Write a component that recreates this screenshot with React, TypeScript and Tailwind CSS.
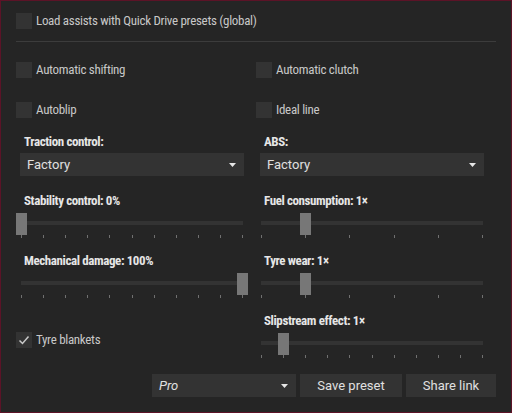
import React from "react";

const narrow = "font-['Roboto_Condensed','Liberation_Sans_Narrow','DejaVu_Sans_Condensed',sans-serif]";
const ui = "font-['Roboto','Liberation_Sans',sans-serif]";

function Check({ label, checked = false }: { label: string; checked?: boolean }) {
  return (
    <div className="flex items-center h-4">
      <div className="w-4 h-4 bg-[#333333] flex items-center justify-center">
        {checked && (
          <svg width="12" height="12" viewBox="0 0 12 12">
            <path d="M1.5 6.5 L4.5 9.5 L10.5 2.5" stroke="#c8c8c8" strokeWidth="1.5" fill="none" />
          </svg>
        )}
      </div>
      <span className={`ml-1 text-[13px] tracking-[-0.3px] leading-4 text-[#c8c8c8] ${narrow}`}>{label}</span>
    </div>
  );
}

function Label({ text }: { text: string }) {
  return (
    <div className={`pl-2 text-[13px] tracking-[-0.4px] leading-4 font-bold text-[#e6e6e6] ${narrow}`}>{text}</div>
  );
}

function Arrow() {
  return (
    <svg width="7" height="4" viewBox="0 0 7 4">
      <path d="M0 0 H7 L3.5 4 Z" fill="#e6e6e6" />
    </svg>
  );
}

function Select({ value, italic = false, className = "" }: { value: string; italic?: boolean; className?: string }) {
  return (
    <div className={`h-[23px] bg-[#333333] flex items-center justify-between pl-[7px] pr-[8px] ${className}`}>
      <span className={`text-[13px] text-[#e0e0e0] ${ui} ${italic ? "italic" : ""}`}>{value}</span>
      <Arrow />
    </div>
  );
}

function Slider({ value, ticks }: { value: number; ticks: number }) {
  const width = 232;
  const thumbLeft = value * (width - 11);
  return (
    <div className="relative w-[232px] h-[26px]">
      <div className="absolute left-[5px] right-[5px] top-2 h-1 bg-[#333333]" />
      <div className="absolute top-0 w-[11px] h-[22px] bg-[#777777]" style={{ left: thumbLeft }} />
      {Array.from({ length: ticks }).map((_, i) => (
        <div
          key={i}
          className="absolute top-[22px] w-px h-[3px] bg-[#707070]"
          style={{ left: 5 + Math.round((i * 221) / (ticks - 1)) }}
        />
      ))}
    </div>
  );
}

function SliderBlock({ label, value, ticks, className = "" }: { label: string; value: number; ticks: number; className?: string }) {
  return (
    <div className={className}>
      <Label text={label} />
      <div className="mt-1">
        <Slider value={value} ticks={ticks} />
      </div>
    </div>
  );
}

export default function App() {
  return (
    <div className="w-[512px] h-[413px] bg-[#252525] border border-[#5c1327] px-[15px] pt-3 overflow-hidden">
      <Check label="Load assists with Quick Drive presets (global)" />
      <div className="mt-3 h-px bg-[#3c3c3c]" />

      <div className="grid grid-cols-[240px_240px] mt-5">
        <Check label="Automatic shifting" />
        <Check label="Automatic clutch" />
      </div>
      <div className="grid grid-cols-[240px_240px] mt-6">
        <Check label="Autoblip" />
        <Check label="Ideal line" />
      </div>

      <div className="grid grid-cols-[240px_240px] mt-4">
        <div>
          <Label text="Traction control:" />
          <Select value="Factory" className="mt-[3px] ml-1 w-[224px]" />
        </div>
        <div>
          <Label text="ABS:" />
          <Select value="Factory" className="mt-[3px] ml-1 w-[224px]" />
        </div>
      </div>

      <div className="grid grid-cols-[240px_240px] mt-[17px]">
        <SliderBlock label="Stability control: 0%" value={0} ticks={11} />
        <SliderBlock label="Fuel consumption: 1×" value={0.2} ticks={6} />
      </div>
      <div className="grid grid-cols-[240px_240px] mt-[14px]">
        <SliderBlock label="Mechanical damage: 100%" value={1} ticks={11} />
        <SliderBlock label="Tyre wear: 1×" value={0.2} ticks={6} />
      </div>
      <div className="grid grid-cols-[240px_240px] mt-[14px]">
        <div className="pt-[19px]">
          <Check label="Tyre blankets" checked />
        </div>
        <SliderBlock label="Slipstream effect: 1×" value={0.1} ticks={11} />
      </div>

      <div className="flex justify-end gap-1 mt-[15px]">
        <Select value="Pro" italic className="w-[144px]" />
        <div className={`w-[102px] h-[23px] bg-[#333333] flex items-center justify-center text-[13px] text-[#e0e0e0] ${ui}`}>
          Save preset
        </div>
        <div className={`w-[90px] h-[23px] bg-[#333333] flex items-center justify-center text-[13px] text-[#e0e0e0] ${ui}`}>
          Share link
        </div>
      </div>
    </div>
  );
}
